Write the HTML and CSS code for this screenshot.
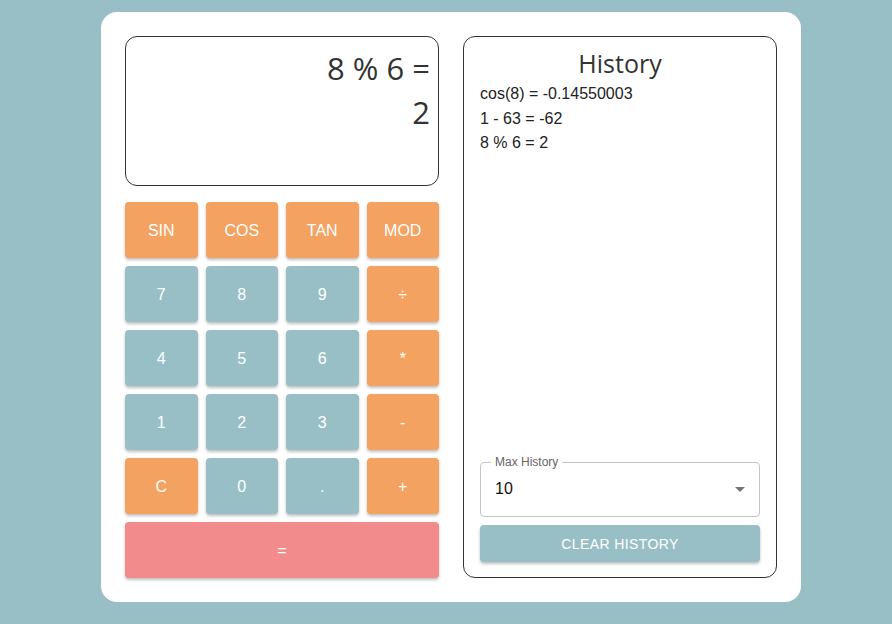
FILE: index.html
```html
<!DOCTYPE html>
<html lang="en">
<head>
  <meta charset="UTF-8">
  <meta name="viewport" content="width=device-width, initial-scale=1.0">
  <title>Calculator</title>
  <link rel="stylesheet" href="styles.css">
</head>
<body>
  <div class="calculator">
    <!-- Left side: display and keypad -->
    <div class="calc-main">
      <div class="display">
        <div class="display-line">8 % 6 =</div>
        <div class="display-line">2</div>
      </div>

      <div class="keypad">
        <button class="key op">SIN</button>
        <button class="key op">COS</button>
        <button class="key op">TAN</button>
        <button class="key op">MOD</button>

        <button class="key">7</button>
        <button class="key">8</button>
        <button class="key">9</button>
        <button class="key op">÷</button>

        <button class="key">4</button>
        <button class="key">5</button>
        <button class="key">6</button>
        <button class="key op">*</button>

        <button class="key">1</button>
        <button class="key">2</button>
        <button class="key">3</button>
        <button class="key op">-</button>

        <button class="key op">C</button>
        <button class="key">0</button>
        <button class="key">.</button>
        <button class="key op">+</button>

        <button class="key equals">=</button>
      </div>
    </div>

    <!-- Right side: history -->
    <div class="history">
      <h2>History</h2>
      <ul class="history-list">
        <li>cos(8) = -0.14550003</li>
        <li>1 - 63 = -62</li>
        <li>8 % 6 = 2</li>
      </ul>

      <div class="history-footer">
        <fieldset class="select-field">
          <legend>Max History</legend>
          <div class="select-value">
            <span>10</span>
            <svg width="10" height="5" viewBox="0 0 10 5"><path d="M0 0 L10 0 L5 5 Z" fill="#757575"/></svg>
          </div>
        </fieldset>
        <button class="clear-button">Clear History</button>
      </div>
    </div>
  </div>
</body>
</html>
```

FILE: styles.css
```css
/* General Reset */
body {
  margin: 0;
  padding: 12px 0 0 101px;
  background: #98bfc6;
  font-family: 'Liberation Sans', Arial, sans-serif;
  color: #222;
  min-height: 100vh;
  box-sizing: border-box;
}

/* Card */
.calculator {
  width: 700px;
  box-sizing: border-box;
  background: #ffffff;
  border-radius: 16px;
  padding: 24px;
  display: flex;
  gap: 24px;
}

.calc-main {
  width: 314px;
  display: flex;
  flex-direction: column;
  gap: 16px;
}

/* Display */
.display {
  height: 150px;
  box-sizing: border-box;
  border: 1px solid #333;
  border-radius: 12px;
  padding: 9px 8px;
  text-align: right;
  font-family: 'Open Sans', sans-serif;
  font-size: 31px;
  color: #333;
}

.display-line {
  line-height: 44px;
}

/* Keypad */
.keypad {
  display: grid;
  grid-template-columns: repeat(4, 1fr);
  grid-auto-rows: 56px;
  gap: 8px;
}

.key {
  border: none;
  border-radius: 4px;
  background: #98bfc6;
  color: #ffffff;
  font-family: 'Liberation Sans', Arial, sans-serif;
  font-size: 16px;
  padding-top: 2px;
  cursor: pointer;
  box-shadow: 0 2px 3px rgba(0, 0, 0, 0.25);
}

.key.op {
  background: #f4a261;
}

.key.equals {
  grid-column: span 4;
  background: #f28b8b;
}

/* History */
.history {
  width: 314px;
  box-sizing: border-box;
  border: 1px solid #333;
  border-radius: 12px;
  padding: 11px 16px 15px;
  display: flex;
  flex-direction: column;
}

.history h2 {
  margin: 0;
  text-align: center;
  font-family: 'Open Sans', sans-serif;
  font-weight: normal;
  font-size: 25px;
  line-height: 30px;
  color: #333;
}

.history-list {
  list-style: none;
  margin: 4px 0 0;
  padding: 0;
  font-size: 16px;
  line-height: 24.5px;
  color: #222;
}

.history-footer {
  margin-top: auto;
  display: flex;
  flex-direction: column;
  gap: 8px;
}

/* Outlined select */
.select-field {
  margin: 0;
  padding: 0 14px;
  height: 61px;
  box-sizing: border-box;
  border: 1px solid #c4c4c4;
  border-radius: 4px;
}

.select-field legend {
  font-size: 12px;
  color: #666;
  padding: 0 4px;
  margin-left: -4px;
  line-height: 12px;
}

.select-value {
  display: flex;
  justify-content: space-between;
  align-items: center;
  height: 42px;
  font-size: 16px;
  color: #111;
}

.clear-button {
  height: 37px;
  border: none;
  border-radius: 4px;
  background: #98bfc6;
  color: #ffffff;
  font-family: 'Liberation Sans', Arial, sans-serif;
  font-size: 14px;
  text-transform: uppercase;
  letter-spacing: 0.4px;
  cursor: pointer;
  box-shadow: 0 2px 3px rgba(0, 0, 0, 0.25);
}
```
